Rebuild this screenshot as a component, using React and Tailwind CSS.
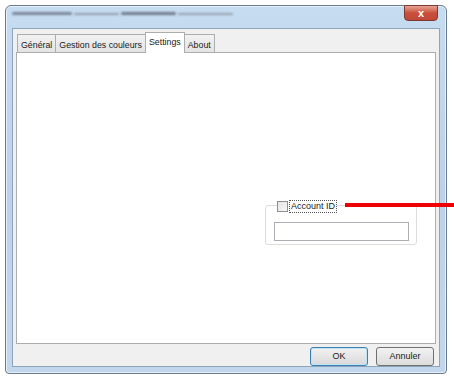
import React from "react";

const tabs = ["Général", "Gestion des couleurs", "Settings", "About"];

export default function App() {
  return (
    <div
      className="relative w-[454px] h-[379px] bg-white pl-[5px] pt-[5px] overflow-hidden"
      style={{ fontFamily: '"Liberation Sans", Arial, sans-serif' }}
    >
      {/* window frame */}
      <div className="w-[442px] h-[369px] flex flex-col rounded-t-[6px] rounded-b-[4px] border border-[#6b7b8f] bg-gradient-to-b from-[#c6dcf1] via-[#bcd2ea] to-[#c3d7ec] shadow-[inset_0_0_0_1px_#e6f0fa]">
        {/* title bar */}
        <div className="h-[22px] flex items-start justify-between pl-[6px] pr-[8px]">
          <div className="mt-[6px] flex items-center gap-[2px] blur-[1px]">
            <div className="w-[60px] h-[3px] rounded bg-[#7a8696]" />
            <div className="w-[45px] h-[2px] rounded bg-[#939eab]" />
            <div className="w-[55px] h-[3px] rounded bg-[#707c8a]" />
            <div className="w-[55px] h-[2px] rounded bg-[#96a1ae]" />
          </div>
          <div className="w-[34px] h-[16px] -mt-px flex items-center justify-center rounded-b-[4px] border border-[#7a3a30] bg-gradient-to-b from-[#e6a395] via-[#c8503c] to-[#c2473a] text-white text-[11px] font-bold leading-none">
            x
          </div>
        </div>

        {/* client area */}
        <div className="mx-[6px] mb-[6px] flex-1 flex flex-col bg-[#f0f0f0] border border-[#8ea4bd] px-[3px] pt-[4px]">
          {/* tab strip */}
          <div className="flex items-end h-[19px] pl-px text-[8.8px] text-[#1a1a1a]">
            {tabs.map((t) =>
              t === "Settings" ? (
                <div
                  key={t}
                  className="relative z-10 h-[21px] -mb-px -ml-px px-[3px] pt-[3px] bg-white border border-b-0 border-[#adadad]"
                >
                  {t}
                </div>
              ) : (
                <div
                  key={t}
                  className="h-[18px] px-[3px] pt-[4px] -ml-px first:ml-0 border border-b-0 border-[#adadad] bg-gradient-to-b from-[#f2f2f2] to-[#e3e3e3]"
                >
                  {t}
                </div>
              )
            )}
          </div>

          {/* tab panel */}
          <div className="h-[292px] bg-white border border-[#adadad] relative">
            <div className="absolute left-[248px] top-[152px] w-[152px] h-[40px] border border-[#dcdcdc] rounded-[3px]" />
            <div className="absolute left-[260px] top-[148px] flex items-center bg-white pr-[1px]">
              <div className="w-[11px] h-[11px] border border-[#8e8f8f] bg-gradient-to-br from-[#e4e4e4] to-[#f8f8f8]" />
              <span className="ml-[2px] px-px text-[9px] leading-[11px] text-[#1a1a1a] outline-1 outline-dotted outline-[#555]">
                Account ID
              </span>
            </div>
            <div className="absolute left-[257px] top-[169px] w-[135px] h-[19px] border border-[#abadb3] bg-white" />
          </div>

          {/* buttons */}
          <div className="flex justify-end gap-[8px] pt-[3px] pr-[2px]">
            <button className="w-[58px] h-[19px] text-[9px] text-[#1a1a1a] border border-[#3c7fb1] rounded-[3px] bg-gradient-to-b from-[#f2f2f2] to-[#d9d9d9] shadow-[inset_0_0_0_1px_#bfe4f7]">
              OK
            </button>
            <button className="w-[58px] h-[19px] text-[9px] text-[#1a1a1a] border border-[#707070] rounded-[3px] bg-gradient-to-b from-[#f2f2f2] to-[#dcdcdc]">
              Annuler
            </button>
          </div>
        </div>
      </div>

      {/* red annotation line */}
      <div className="absolute left-[345px] top-[203px] w-[109px] h-[4px] bg-[#ee0000]" />
    </div>
  );
}
